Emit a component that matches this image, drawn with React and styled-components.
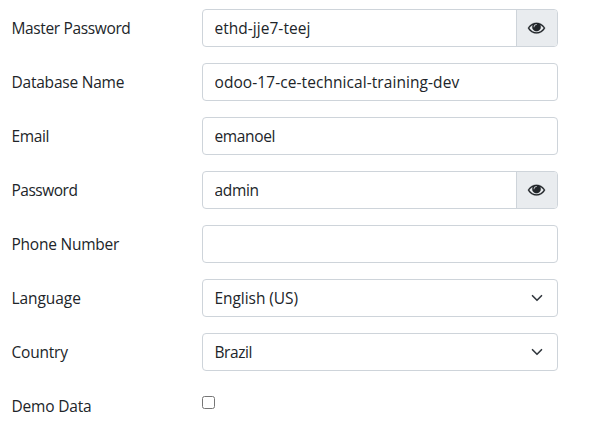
import React from "react";
import styled, { createGlobalStyle } from "styled-components";

const GlobalStyle = createGlobalStyle`
  *, *::before, *::after { box-sizing: border-box; }
  body {
    margin: 0;
    overflow: hidden;
    background: #fff;
    color: #212529;
    font: 15.5px/24px "Open Sans", "Noto Sans", sans-serif;
  }
`;

const Form = styled.form`
  display: flex;
  flex-direction: column;
  gap: 16px;
  padding: 9px 37px 0 12px;
`;

const Row = styled.div`
  display: grid;
  grid-template-columns: 190px 356px;
  height: 38px;
`;

const Label = styled.label`
  padding-top: 7px;
  margin-left: -0.5px;
  white-space: nowrap;
  letter-spacing: ${(p) => p.$spacing || 0}px;
`;

const Group = styled.div`
  display: flex;
  height: 38px;
  border: 1px solid #ced4da;
  border-radius: 4px;
  overflow: hidden;
`;

const Input = styled.input`
  flex: 1;
  min-width: 0;
  padding: 0 11.5px;
  border: 0;
  outline: 0;
  background: transparent;
  color: #212529;
  font: inherit;
  letter-spacing: ${(p) => p.$spacing || 0}px;
`;

const EyeButton = styled.button`
  display: flex;
  align-items: center;
  justify-content: center;
  width: 41px;
  padding: 0;
  border: 0;
  border-left: 1px solid #ced4da;
  background: #e9ecef;
  color: #212529;
`;

const EyeIcon = styled.svg`
  display: block;
  width: 17px;
  height: 17px;
  margin: 0 1px 1px 0;
  fill: currentColor;
  overflow: visible;
`;

const SelectBox = styled.div`
  flex: 1;
  display: flex;
  align-items: center;
  justify-content: space-between;
  padding: 0 14px 0 11.5px;
  letter-spacing: ${(p) => p.$spacing || 0}px;
`;

const Checkbox = styled.input`
  appearance: none;
  width: 13px;
  height: 13px;
  margin: 9px 0 0;
  border: 1px solid #767676;
  border-radius: 2.5px;
  background: #fff;
`;

const fields = [
  { label: "Master Password", labelSpacing: -0.36, value: "ethd-jje7-teej", spacing: 0.03, type: "secret" },
  { label: "Database Name", labelSpacing: -0.22, value: "odoo-17-ce-technical-training-dev", spacing: 0.07 },
  { label: "Email", labelSpacing: -0.35, value: "emanoel", spacing: -0.36 },
  { label: "Password", labelSpacing: -0.5, value: "admin", spacing: -0.35, type: "secret" },
  { label: "Phone Number", labelSpacing: -0.23, value: "" },
  { label: "Language", labelSpacing: -0.07, value: "English (US)", spacing: -0.06, type: "select" },
  { label: "Country", labelSpacing: -0.22, value: "Brazil", spacing: -0.42, type: "select" },
  { label: "Demo Data", labelSpacing: -0.18, type: "checkbox" },
];

const Eye = () => (
  <EyeIcon viewBox="0 0 1792 1792" aria-hidden="true">
    <path d="M1664 960q-152-236-381-353 61 104 61 225 0 185-131.5 316.5t-316.5 131.5-316.5-131.5-131.5-316.5q0-121 61-225-229 117-381 353 133 205 333.5 326.5t434.5 121.5 434.5-121.5 333.5-326.5zm-720-384q0-20-14-34t-34-14q-125 0-214.5 89.5t-89.5 214.5q0 20 14 34t34 14 34-14 14-34q0-86 61-147t147-61q20 0 34-14t14-34zm848 384q0 34-20 69-140 230-376.5 368.5t-499.5 138.5-499.5-139-376.5-368q-20-35-20-69t20-69q140-229 376.5-368t499.5-139 499.5 139 376.5 368q20 35 20 69z" stroke="currentColor" strokeWidth="24" />
  </EyeIcon>
);

const Chevron = () => (
  <svg width="12" height="12" viewBox="0 0 16 16" fill="none" stroke="#343a40" strokeWidth="2.2" strokeLinecap="round" strokeLinejoin="round">
    <path d="m2 5 6 6 6-6" />
  </svg>
);

function Control({ field }) {
  if (field.type === "checkbox") return <Checkbox type="checkbox" id={field.label} />;
  return (
    <Group>
      {field.type === "select" ? (
        <SelectBox $spacing={field.spacing}>
          <span>{field.value}</span>
          <Chevron />
        </SelectBox>
      ) : (
        <Input id={field.label} defaultValue={field.value} $spacing={field.spacing} />
      )}
      {field.type === "secret" && (
        <EyeButton type="button" aria-label="Show">
          <Eye />
        </EyeButton>
      )}
    </Group>
  );
}

export default function App() {
  return (
    <>
      <GlobalStyle />
      <Form>
        {fields.map((field) => (
          <Row key={field.label}>
            <Label htmlFor={field.label} $spacing={field.labelSpacing}>{field.label}</Label>
            <Control field={field} />
          </Row>
        ))}
      </Form>
    </>
  );
}
